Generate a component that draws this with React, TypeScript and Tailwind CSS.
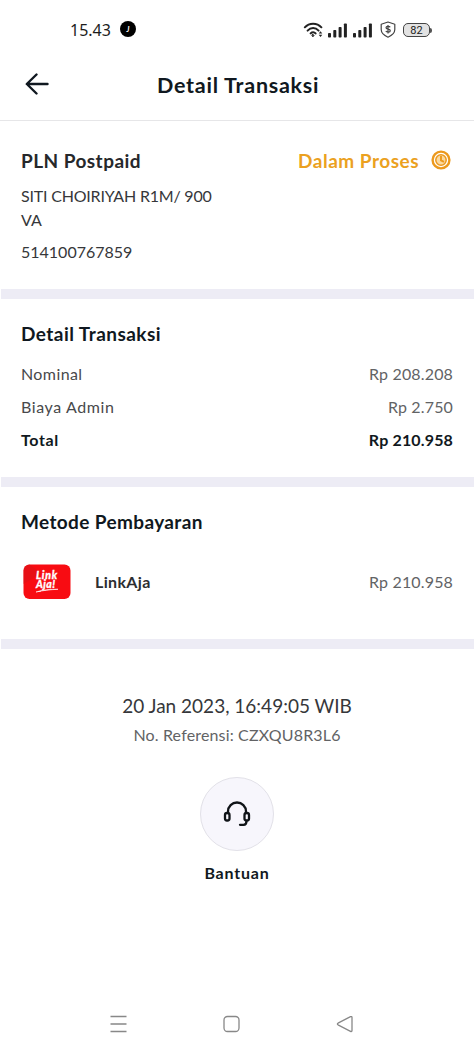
import { clsx } from "clsx";

interface RowProps {
  label: string;
  value: string;
  labelClass?: string;
  bold?: boolean;
}

function Row({ label, value, labelClass, bold }: RowProps) {
  return (
    <div
      className={clsx(
        "flex h-[33px] items-center justify-between text-base",
        bold && "font-bold text-[#101820]"
      )}
    >
      <span className={clsx(!bold && "text-[#48494b]", labelClass)}>{label}</span>
      <span className={clsx("tracking-[0.15px]", !bold && "text-[#626365]")}>{value}</span>
    </div>
  );
}

function Divider() {
  return <div className="ml-px h-[10px] shrink-0 bg-[#edecf5]" />;
}

function Signal() {
  return (
    <svg width="20" height="15" viewBox="0 0 20 15" fill="#222">
      <rect x="0" y="10" width="3" height="4.5" rx="0.8" />
      <rect x="5.3" y="7" width="3" height="7.5" rx="0.8" />
      <rect x="10.6" y="4" width="3" height="10.5" rx="0.8" />
      <rect x="15.9" y="0.5" width="3" height="14" rx="0.8" />
    </svg>
  );
}

function StatusBar() {
  return (
    <div className="flex h-[60px] items-center pl-[70px] pr-[42px]">
      <span className="w-[41px] text-[16px] text-[#1c1c1c] font-['Noto_Sans',sans-serif]">
        15.43
      </span>
      <span className="ml-[9px] mb-[2px] flex size-4 items-center justify-center rounded-full bg-black text-[7px] font-black italic text-white">
        J
      </span>

      <div className="ml-auto flex items-center">
        <svg width="20" height="16" viewBox="0 0 20 16" fill="none" stroke="#222" strokeWidth="2" strokeLinecap="round">
          <path d="M1.8 5.3C6.2.4 14 .4 18.400 5.300" />
          <path d="M4.600 8.600c3.200-3.400 7.800-3.400 11 0" />
          <path d="M7.600 11.400c1.600-1.600 3.600-1.600 5 0" />
          <path d="M10 12.400l1 1.300-1 1-1-1z" fill="#222" strokeWidth="1" />
          <path d="M17.500 9.200l1.800 2.300h-3.600zM17.500 15l1.800-2.200h-3.600z" fill="#222" stroke="none" />
        </svg>
        <span className="ml-[5px]">
          <Signal />
        </span>
        <span className="ml-[5px]">
          <Signal />
        </span>
        <svg className="ml-[7px] mb-px" width="16" height="17" viewBox="0 0 16 17" fill="none" stroke="#444" strokeWidth="1.2" strokeLinejoin="round">
          <path d="M8 1l6.8 2.2v5.3c0 3.6-3 6-6.8 7.7-3.8-1.7-6.8-4.1-6.8-7.7V3.2z" />
          <path d="M10.2 6.3C9.6 5 6 4.9 6 6.7c0 2 4.300 1 4.300 3 0 1.900-3.700 1.800-4.500.3M8 4v8.600" />
        </svg>
        <div className="ml-[7px] flex h-[14px] w-[27px] items-center justify-center rounded-[5px] border border-[#444] bg-[#e2e2e2] pt-px text-[11px] leading-none text-[#222] font-['Roboto',sans-serif]">
          82
        </div>
        <div className="h-[5px] w-[2px] rounded-r-sm bg-[#555]" />
      </div>
    </div>
  );
}

function LinkAjaLogo() {
  return (
    <svg className="ml-[2px]" width="48" height="36" viewBox="0 0 48 36">
      <rect x="0.5" y="0.5" width="47" height="34.5" rx="6" fill="#f80c12" />
      <path d="M.5 20V6.500a6 6 0 0 1 6-6L18 9z" fill="#d9141a" opacity=".55" />
      <g
        fill="#fff"
        stroke="#fff"
        strokeWidth=".3"
        fontFamily="Lato, sans-serif"
        fontWeight="900"
        fontStyle="italic"
        fontSize="10.5"
      >
        <text x="13" y="15" textLength="21">Link</text>
        <text x="13" y="23.5" textLength="19">Aja!</text>
      </g>
      <path d="M13 28c7-2.200 14-2.900 22-2.700-8 .3-15 1.200-22 2.700z" fill="#fff" stroke="#fff" strokeWidth=".6" />
    </svg>
  );
}

export default function App() {
  return (
    <div className="flex h-[1053px] w-[474px] flex-col overflow-hidden bg-white font-['Lato',sans-serif] text-[#101820]">
      <StatusBar />

      {/* Header */}
      <header className="flex h-[61px] items-center border-b border-[#e6e6e8] pb-[12px] pl-[25px]">
        <svg width="24" height="22" viewBox="0 0 24 22" fill="none" stroke="#101820" strokeWidth="2.4" strokeLinecap="round" strokeLinejoin="round">
          <path d="M11.500 1.500L1.800 11l9.700 9.500M2 11h20.500" />
        </svg>
        <h1 className="ml-[108px] pt-[2px] text-[21.5px] font-bold tracking-[0.75px]">Detail Transaksi</h1>
      </header>

      {/* Bill */}
      <section className="h-[168px] px-[21px] pt-[26px] text-base text-[#36373a]">
        <div className="flex h-[28px] items-center justify-between">
          <h2 className="text-[19px] font-bold tracking-[0.45px] text-[#26282b]">PLN Postpaid</h2>
          <div className="flex items-center text-[#eba11f]">
            <span className="text-[19px] font-bold tracking-[0.5px]">Dalam Proses</span>
            <svg className="ml-[12px] mr-[2px] mb-[2px]" width="20" height="20" viewBox="0 0 20 20" fill="none" stroke="#ec991d">
              <circle cx="10" cy="10" r="8.4" strokeWidth="2.4" />
              <circle cx="10" cy="10" r="5.2" strokeWidth="1.5" fill="#fbd9a0" />
              <path d="M10 6v4.300l3 1.500" strokeWidth="1.9" />
            </svg>
          </div>
        </div>
        <p className="mt-[9px] w-[200px] leading-6">
          <span className="tracking-[-0.2px]">SITI CHOIRIYAH R1M/ 900</span> VA
        </p>
        <p className="mt-[8px] leading-6">514100767859</p>
      </section>

      <Divider />

      {/* Breakdown */}
      <section className="h-[178px] px-[21px] pt-[21px]">
        <h2 className="h-[37px] text-[19px] font-bold leading-[27px] tracking-[0.45px]">Detail Transaksi</h2>
        <Row label="Nominal" value="Rp 208.208" labelClass="tracking-[0.4px]" />
        <Row label="Biaya Admin" value="Rp 2.750" labelClass="tracking-[0.6px]" />
        <Row label="Total" value="Rp 210.958" labelClass="tracking-[0.6px]" bold />
      </section>

      <Divider />

      {/* Payment method */}
      <section className="h-[152px] px-[21px] pt-[21px]">
        <h2 className="text-[19px] font-bold leading-[27px] tracking-[0.37px]">Metode Pembayaran</h2>
        <div className="mt-[28px] flex h-[38px] items-center text-base">
          <LinkAjaLogo />
          <span className="ml-[24px] font-bold tracking-[0.35px] text-[#2c2e31]">LinkAja</span>
          <span className="ml-auto tracking-[0.15px] text-[#626365]">Rp 210.958</span>
        </div>
      </section>

      <Divider />

      {/* Timestamp and help */}
      <section className="flex flex-1 flex-col items-center pt-[43px]">
        <p className="text-[19px] leading-[27px] text-[#36373a]">20 Jan 2023, 16:49:05 WIB</p>
        <p className="mt-[4px] text-base leading-6 tracking-[0.16px] text-[#626365]">No. Referensi: CZXQU8R3L6</p>
        <button className="mt-[30px] flex size-[74px] items-center justify-center rounded-full border border-[#e2e1e8] bg-[#f7f6fc]">
          <svg width="28" height="26" viewBox="0 0 28 26" fill="none" stroke="#101418" strokeWidth="2.3" strokeLinecap="round" strokeLinejoin="round">
            <path d="M5 12v-1.500a9 9 0 0 1 18 0V12" />
            <rect x="2" y="12" width="4.5" height="7.5" rx="2" />
            <rect x="21.5" y="12" width="4.5" height="7.5" rx="2" />
            <path d="M23.500 20c0 3-1 3.800-3 3.800h-3.500" />
          </svg>
        </button>
        <p className="mt-[10px] text-base font-bold leading-6 tracking-[0.8px]">Bantuan</p>
      </section>

      {/* System navigation */}
      <nav className="flex h-[58px] items-center pl-[110px]">
        <svg width="244" height="18" viewBox="0 0 244 18" fill="none" stroke="#888" strokeWidth="1.3" strokeLinejoin="round">
          <path d="M.5 1.500h16M.5 9h16M.5 16.500h16" />
          <rect x="114" y="1.5" width="15" height="15" rx="3.5" />
          <path d="M228 8.200l12.500-6.500c.9-.4 1.500 0 1.500.8v13c0 .9-.6 1.200-1.500.8L228 9.800c-.8-.5-.8-1.100 0-1.600z" />
        </svg>
      </nav>
    </div>
  );
}
